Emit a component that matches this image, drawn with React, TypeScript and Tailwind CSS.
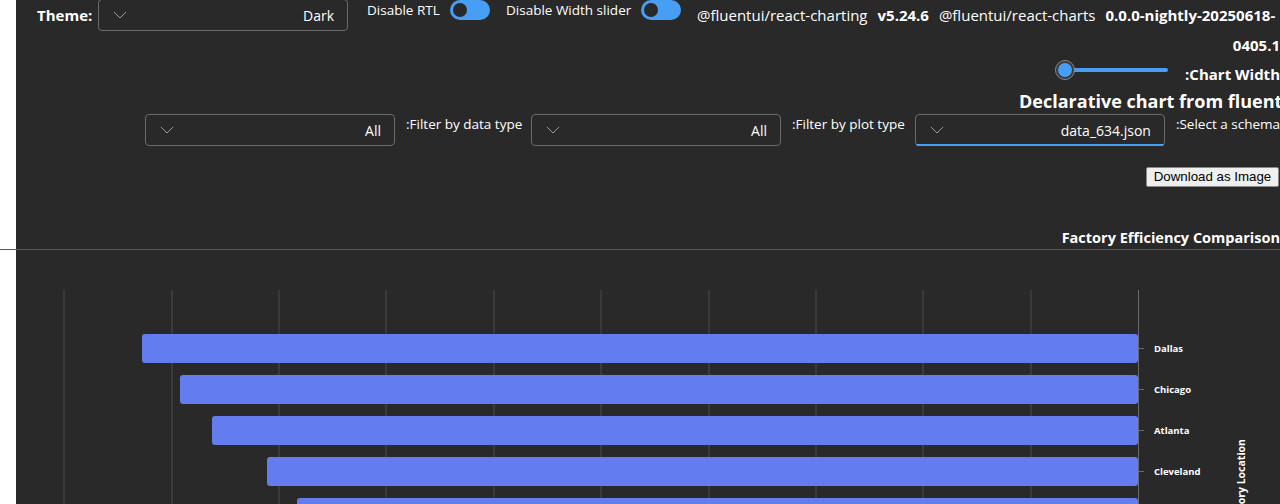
const bars = [
  { name: "Dallas", x: 126, y: 84 },
  { name: "Chicago", x: 164, y: 125 },
  { name: "Atlanta", x: 196, y: 166 },
  { name: "Cleveland", x: 251, y: 207 },
  { name: "Houston", x: 281, y: 248 },
];

const grid = [48, 156, 263, 370, 478, 585, 693, 800, 907, 1015];

const Chevron = () => (
  <svg width="14" height="8" viewBox="0 0 14 8" className="shrink-0">
    <path d="M1 1 L7 7 L13 1" fill="none" stroke="#9a9a9a" strokeWidth="1" />
  </svg>
);

const Dropdown = ({ value, focused }: { value: string; focused?: boolean }) => (
  <div className="relative flex h-[32px] w-[250px] shrink-0 items-center justify-between rounded-[4px] border border-[#6b6b6b] bg-[#292929] pl-[14px] pr-[13px]">
    <Chevron />
    <span className="text-[14px] text-white">{value}</span>
    {focused && <div className="absolute -bottom-px left-0 right-0 h-[2px] rounded-b-[4px] bg-[#479ef5]" />}
  </div>
);

const Toggle = () => (
  <div className="flex h-[20px] w-[40px] shrink-0 items-center rounded-full bg-[#479ef5] px-[3px]">
    <div className="h-[14px] w-[14px] rounded-full bg-[#292929]" />
  </div>
);

export default function App() {
  return (
    <div className="h-[504px] w-[1280px] overflow-hidden bg-white font-['Open_Sans',sans-serif]">
      <div className="ml-4 h-full w-[1264px] bg-[#292929] text-white">
        {/* top row */}
        <div className="flex h-[34px] items-start whitespace-nowrap pl-[21px]">
          <span className="mt-[4px] w-[61px] text-[15px] font-bold">Theme:</span>
          <div className="-mt-px">
            <Dropdown value="Dark" />
          </div>
          <span className="ml-[19px] w-[83px] text-[13.5px] leading-[20px]">Disable RTL</span>
          <Toggle />
          <span className="ml-[16px] w-[135px] text-[13.5px] leading-[20px]">Disable Width slider</span>
          <Toggle />
          <div className="ml-[16px] mt-[4px] flex gap-[10px] text-[15px]">
            <span>@fluentui/react-charting</span>
            <span className="font-bold">v5.24.6</span>
            <span>@fluentui/react-charts</span>
            <span className="font-bold">0.0.0-nightly-20250618-</span>
          </div>
        </div>
        <div className="flex h-[22px] justify-end text-[15px] font-bold leading-[22px]">0405.1</div>

        {/* chart width slider */}
        <div className="flex h-[32px] items-start justify-end gap-[17px]">
          <div className="relative mt-[4px] flex h-[20px] w-[112px] items-center">
            <div className="ml-[8px] h-[4px] w-[104px] rounded-full bg-[#479ef5]" />
            <div className="absolute left-0 top-[1px] h-[18px] w-[18px] rounded-full border-[2px] border-[#3b3b3b] bg-[#479ef5] outline outline-1 outline-[#8a8a8a]" />
          </div>
          <span className="mt-[8px] text-[15px] font-bold leading-[20px]">:Chart Width</span>
        </div>

        <div className="flex h-[26px] items-center whitespace-nowrap pl-[1003px] text-[18px] font-bold">
          Declarative chart from fluentui
        </div>

        {/* filters */}
        <div className="flex h-[32px] items-start whitespace-nowrap pl-[129px]">
          <Dropdown value="All" />
          <span className="ml-[11px] w-[126px] text-[13.5px] leading-[20px]">:Filter by data type</span>
          <Dropdown value="All" />
          <span className="ml-[11px] w-[124px] text-[13.5px] leading-[20px]">:Filter by plot type</span>
          <Dropdown value="data_634.json" focused />
          <span className="ml-[11px] text-[13.5px] leading-[20px]">:Select a schema</span>
        </div>

        <div className="mt-[21px] flex h-[20px] justify-end pr-[1px]">
          <button className="h-[20px] w-[133px] rounded-[2px] border border-[#8a8a8a] bg-[#efefef] font-['Liberation_Sans',sans-serif] text-[13.3px] leading-[18px] text-black">
            Download as Image
          </button>
        </div>

        <div className="mt-[41px] flex h-[21px] justify-end whitespace-nowrap text-[14.5px] font-bold leading-[20px]">
          Factory Efficiency Comparison
        </div>

        <div className="-ml-4 w-[1280px] border-t border-[#575757]" />

        <svg width="1264" height="260" className="block">
          {grid.map((x) => (
            <line key={x} x1={x} y1={40} x2={x} y2={260} stroke="#4c4c4c" strokeWidth="1" />
          ))}
          <line x1={1122.5} y1={40} x2={1122.5} y2={260} stroke="#6a6a6a" strokeWidth="1" />
          {bars.map((b) => (
            <g key={b.name}>
              <rect x={b.x} y={b.y} width={1122 - b.x} height={29} rx={3} fill="#637cef" />
              <line x1={1122} y1={b.y + 14.5} x2={1128} y2={b.y + 14.5} stroke="#6a6a6a" strokeWidth="1" />
              <text
                x={1138}
                y={b.y + 18}
                fill="#ffffff"
                fontSize="9.5"
                fontWeight="700"
                fontFamily="Open Sans, sans-serif"
              >
                {b.name}
              </text>
            </g>
          ))}
          <text
            transform="translate(1229 189) rotate(-90)"
            textAnchor="end"
            fill="#ffffff"
            fontSize="10.5"
            fontWeight="700"
            fontFamily="Open Sans, sans-serif"
          >
            Factory Location
          </text>
        </svg>
      </div>
    </div>
  );
}
